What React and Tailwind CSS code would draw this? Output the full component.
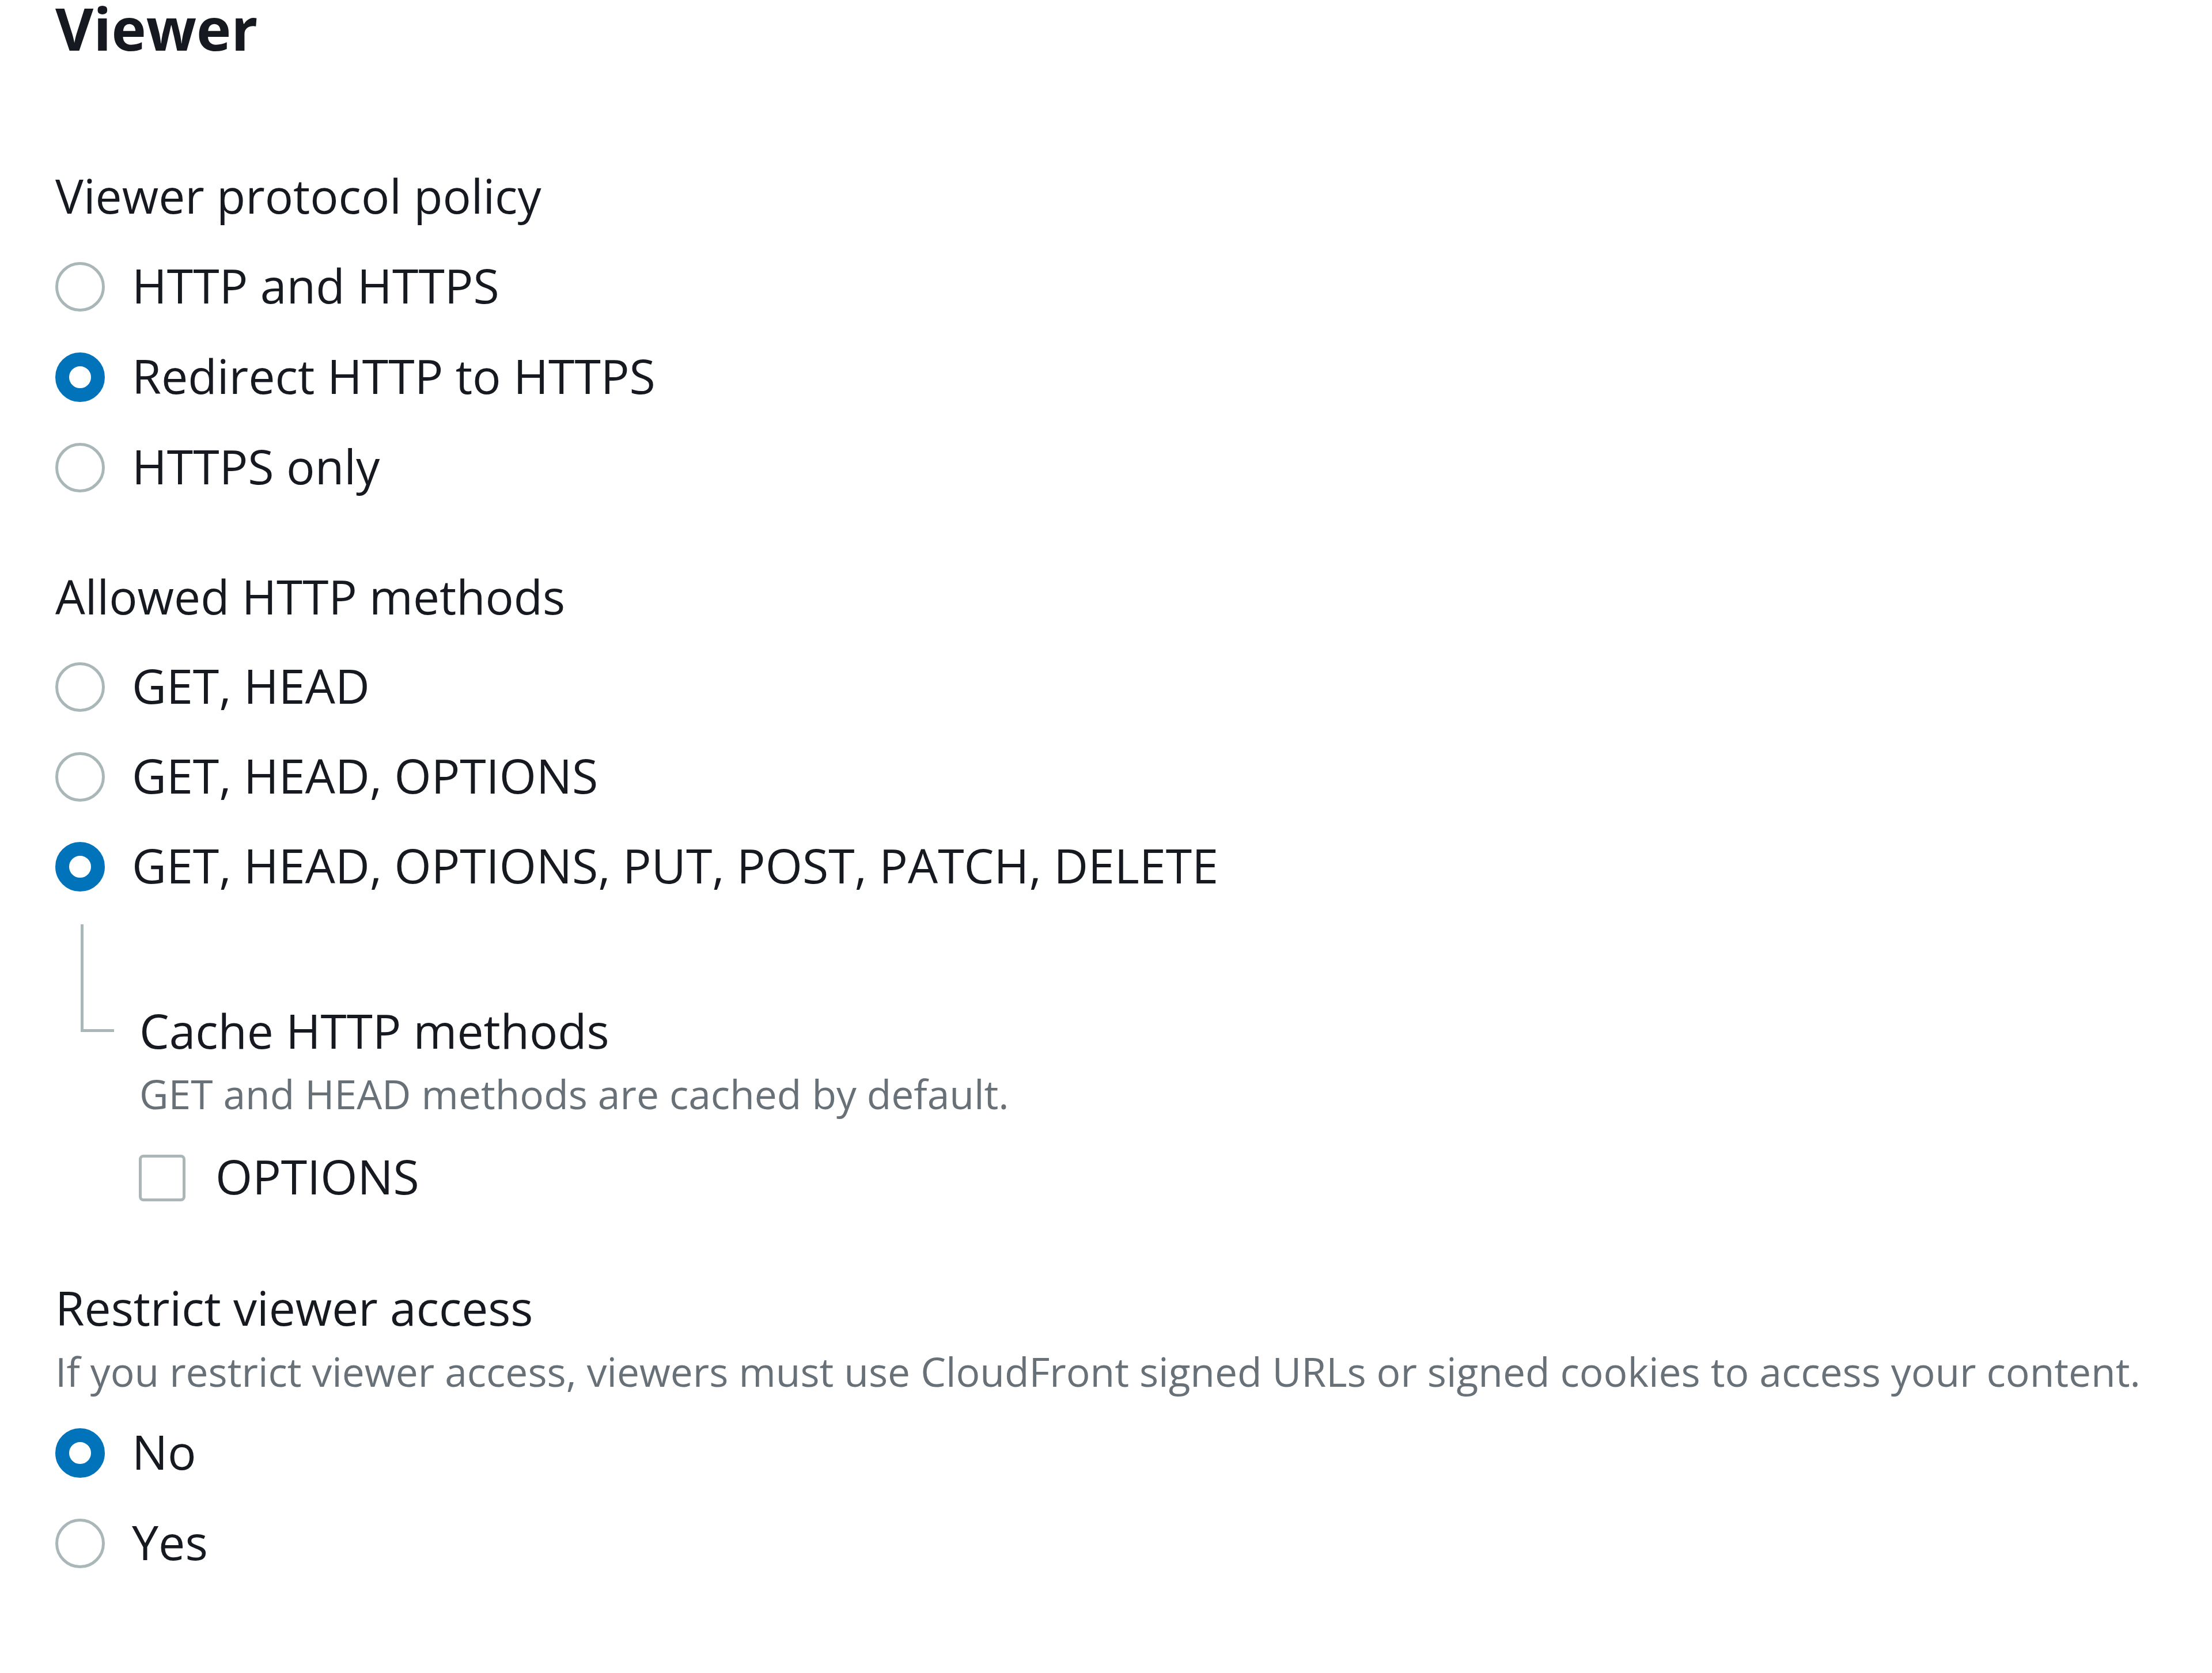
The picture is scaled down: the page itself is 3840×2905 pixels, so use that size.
import React, { useState } from 'react';

const font = { fontFamily: '"Open Sans", "Noto Sans", sans-serif' };

function Radio({ checked }) {
    return checked ? (
        <span className="mt-[6px] block h-[86px] w-[86px] shrink-0 rounded-full border-[24px] border-[#0073bb] bg-white" />
    ) : (
        <span className="mt-[6px] block h-[86px] w-[86px] shrink-0 rounded-full border-[5px] border-[#aab7b8] bg-white" />
    );
}

function RadioRow({ label, checked, onSelect, tall = true }) {
    return (
        <div
            className={`flex items-center gap-[47px] cursor-pointer ${tall ? 'h-[157px]' : 'h-[156px]'}`}
            onClick={onSelect}
        >
            <Radio checked={checked} />
            <span className="text-[82.5px] leading-[100px] text-[#16191f] whitespace-nowrap">{label}</span>
        </div>
    );
}

function Label({ children, className = '' }) {
    return (
        <div className={`h-[100px] flex items-center text-[82px] leading-[100px] text-[#16191f] whitespace-nowrap ${className}`}>
            {children}
        </div>
    );
}

function Description({ children, className = '' }) {
    return (
        <div className={`h-[80px] flex items-center text-[69.5px] leading-[80px] text-[#687078] whitespace-nowrap ${className}`}>
            {children}
        </div>
    );
}

export default function App() {
    const [protocol, setProtocol] = useState('redirect');
    const [methods, setMethods] = useState('all');
    const [cacheOptions, setCacheOptions] = useState(false);
    const [restrict, setRestrict] = useState('no');

    const protocolOptions = [
        { id: 'both', label: 'HTTP and HTTPS' },
        { id: 'redirect', label: 'Redirect HTTP to HTTPS' },
        { id: 'https', label: 'HTTPS only' },
    ];

    const methodOptions = [
        { id: 'get', label: 'GET, HEAD' },
        { id: 'options', label: 'GET, HEAD, OPTIONS' },
        { id: 'all', label: 'GET, HEAD, OPTIONS, PUT, POST, PATCH, DELETE' },
    ];

    return (
        <div className="min-h-[2905px] w-full bg-white pl-[96px] overflow-hidden" style={font}>
            <h2 className="h-[97px] flex items-center text-[102px] leading-[97px] font-bold text-[#16191f]">
                Viewer
            </h2>

            <Label className="mt-[192px]">Viewer protocol policy</Label>
            <div className="mt-[27px] flex flex-col">
                {protocolOptions.map((opt) => (
                    <RadioRow
                        key={opt.id}
                        label={opt.label}
                        checked={protocol === opt.id}
                        onSelect={() => setProtocol(opt.id)}
                    />
                ))}
            </div>

            <Label className="mt-[98px]">Allowed HTTP methods</Label>
            <div className="mt-[27px] flex flex-col">
                {methodOptions.map((opt) => (
                    <RadioRow
                        key={opt.id}
                        label={opt.label}
                        tall={false}
                        checked={methods === opt.id}
                        onSelect={() => setMethods(opt.id)}
                    />
                ))}
            </div>

            {/* nested cache settings with the tree connector */}
            <div className="flex">
                <div className="w-[146px] shrink-0">
                    <div className="mt-[25px] ml-[44px] h-[187px] w-[58px] border-l-[5px] border-b-[5px] border-[#aab7b8]" />
                </div>
                <div className="pt-[159px] flex flex-col">
                    <Label>Cache HTTP methods</Label>
                    <Description className="mt-[20px]">GET and HEAD methods are cached by default.</Description>
                    <div
                        className="mt-[53px] h-[100px] flex items-center cursor-pointer"
                        onClick={() => setCacheOptions(!cacheOptions)}
                    >
                        <span
                            className={`mt-[6px] -ml-[1px] block h-[81px] w-[81px] shrink-0 rounded-[8px] border-[5px] ${
                                cacheOptions ? 'border-[#0073bb] bg-[#0073bb]' : 'border-[#aab7b8] bg-white'
                            }`}
                        />
                        <span className="ml-[52px] text-[82.5px] leading-[100px] text-[#16191f]">OPTIONS</span>
                    </div>
                </div>
            </div>

            <Label className="mt-[128px]">Restrict viewer access</Label>
            <Description className="mt-[21px]">
                If you restrict viewer access, viewers must use CloudFront signed URLs or signed cookies to access your content.
            </Description>
            <div className="mt-[20px] flex flex-col">
                <RadioRow label="No" checked={restrict === 'no'} onSelect={() => setRestrict('no')} />
                <RadioRow label="Yes" checked={restrict === 'yes'} onSelect={() => setRestrict('yes')} />
            </div>
        </div>
    );
}
